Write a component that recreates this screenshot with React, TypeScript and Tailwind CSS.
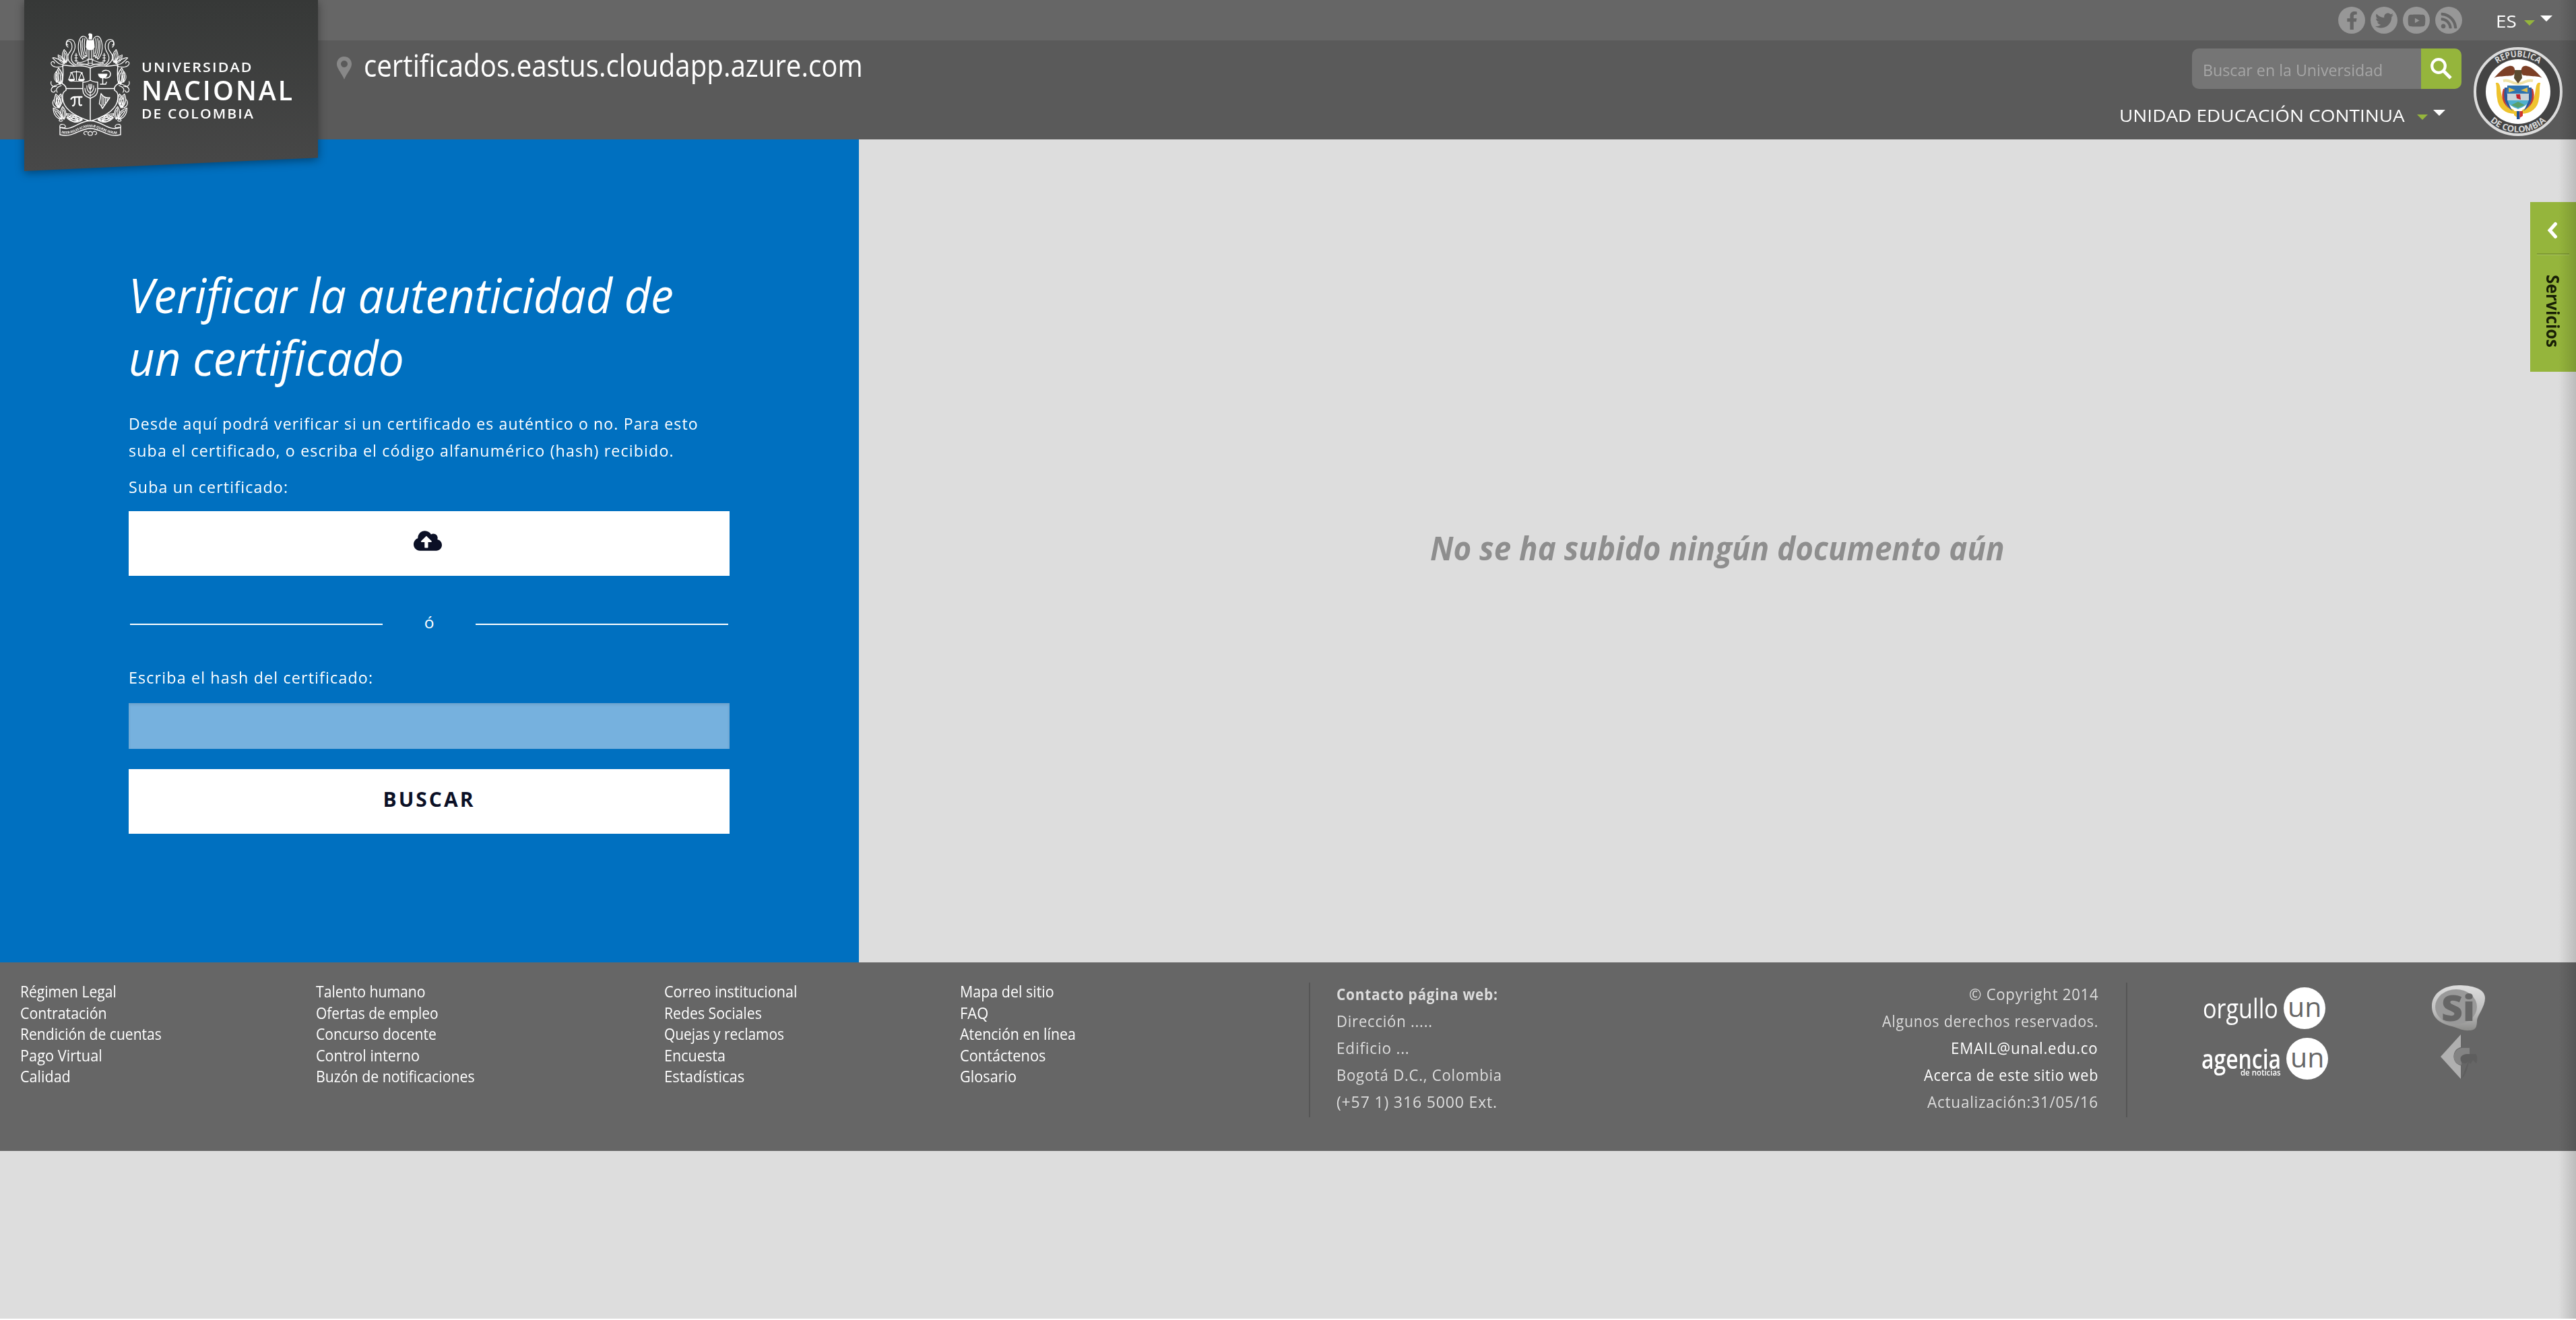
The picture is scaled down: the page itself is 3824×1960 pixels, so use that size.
import { useLayoutEffect, useRef, useState, type ReactNode } from 'react';
import { FaCloudUploadAlt, FaFacebookF, FaTwitter, FaYoutube, FaRss } from 'react-icons/fa';

/* Single line of text condensed or stretched to an exact width. */
function Fit({ w, className = '', children }: { w: number; className?: string; children: ReactNode }) {
  const ref = useRef<HTMLSpanElement>(null);
  const [scale, setScale] = useState(1);
  useLayoutEffect(() => {
    if (ref.current && ref.current.offsetWidth) setScale(w / ref.current.offsetWidth);
  }, [w]);
  return (
    <span className={`block ${className}`} style={{ width: w }}>
      <span ref={ref} className="inline-block origin-left whitespace-nowrap" style={{ transform: `scaleX(${scale})` }}>
        {children}
      </span>
    </span>
  );
}

function Leaf({ x, y, r, s = 1 }: { x: number; y: number; r: number; s?: number }) {
  return (
    <g transform={`translate(${x} ${y}) rotate(${r}) scale(${s})`}>
      <path d="M0 0C-5.500 -5 -5.500 -13 0 -20C5 -13 5.500 -5 0 0Z" />
      <path d="M0 0C-2 -6 -2 -11 0 -17M0 -1C2.200 -6 2.200 -10 1 -14" />
    </g>
  );
}

function HalfWreath() {
  return (
    <g>
      <path d="M110 97C100 92 98 84 104 77C109 71 107 62 102 61C98 61 98 66 101 67M112 96C106 92 104 86 108 79C114 70 112 59 104 58.500C97 59 97 68 101 70" />
      <Leaf x={98} y={93} r={-8} s={0.98} />
      <Leaf x={96} y={94} r={-38} s={0.8} />
      <path d="M96 92C88 90 82 84 78 86C86 94 90 98 96 94M94 98C86 101 78 100 76 95C75 91 80 90 81 94" />
      <Leaf x={89} y={125} r={-5} s={1.2} />
      <Leaf x={84} y={122} r={-2} s={0.8} />
      <path d="M91 124C84 126 77 128 76 133C76 138 82 138 82 134M91 127C85 129 82 132 85 137M76 121C74 127 80 130 84 128" />
      <Leaf x={88} y={160} r={-14} s={1.05} />
      <Leaf x={86} y={160} r={12} s={1.05} />
      <Leaf x={92} y={177} r={-38} s={1.05} />
      <Leaf x={95} y={177} r={-6} s={0.95} />
      <path d="M84 160C78 158 77 152 80 148M90 176C85 180 90 181 93 179" />
      <Leaf x={122} y={178} r={-82} s={1.15} />
      <Leaf x={116} y={180} r={-58} s={1.05} />
    </g>
  );
}

function UniversityCrest() {
  return (
    <svg viewBox="73 48 121 155" className="h-[155px] w-[121px]" fill="none" stroke="#fff" strokeWidth="1.200" strokeLinecap="round" strokeLinejoin="round">
      <HalfWreath />
      <g transform="translate(267.600 0) scale(-1 1)">
        <HalfWreath />
      </g>
      <path strokeWidth="1.500" d="M134 101C128 98 122 97 112 98C105 99 98 96 93 97C94 106 94 115 92 124C96 126 99 129 98 134C95 136 92 138 93 146C94 162 112 173 134 180C156 173 174 162 175 146C176 138 173 136 170 134C169 129 172 126 176 124C174 115 174 106 175 97C170 96 163 99 156 98C146 97 140 98 134 101Z" />
      <path d="M134 98C128 95 121 94 112 95.500M134 98C140 95 147 94 156 95.500" />
      <path strokeWidth="1.500" d="M134 101V180M99 131.500H169" />
      <path fill="#414141" strokeWidth="1.400" d="M123 122C127 122 131 121 134 119C137 121 141 122 145 122V134C145 140 140 144 134 146C128 144 123 140 123 134Z" />
      <path d="M134 144V125M134 142C128 140 126 136 126 131M134 142C140 140 142 136 142 131M134 138C130 136 128.500 133 129 127M134 138C138 136 139.500 133 139 127M134 133C132 131 131.500 128 132 125M134 133C136 131 136.500 128 136 125" />
      {/* scales */}
      <path d="M113.500 105V119M109 120.500H118M104.500 108C110 106 117 106 122.500 108M106 108L102 118H110.500L107 108M121 108L117 118H125L121.500 108" />
      <path fill="#fff" d="M102 118H110.500C109.500 121.500 103 121.500 102 118ZM116.500 118H125C124 121.500 117.500 121.500 116.500 118Z" />
      {/* cup and serpent */}
      <path fill="#fff" d="M146 110H159C158 115 155 116 152.500 116C150 116 147 115 146 110Z" />
      <path strokeWidth="1.500" d="M152.500 116V124M149 125H157L158 122M152 106C156 103 164 104 164 110C164 115 160 116 156 116" />
      {/* pi */}
      <path strokeWidth="2.300" d="M105.500 147C107 143.500 109 144 121.500 144M111 144V151C111 155 110 157 108 157M117.500 144V153C117.500 156 119 157 121 156" />
      {/* harp */}
      <path strokeWidth="1.500" d="M150 139L147.500 154C151 157 151 159 152 161L163 145C158 146 153 144 150 139Z" />
      <path d="M151.500 143V157M154 145V156M156.500 146V153M159 146V150" />
      {/* eagle */}
      <path fill="#fff" d="M134 50C131 49.500 131.500 53 133 52.500L132 58H136C136 54 138 50 134 50ZM129 60H139L140 70L136.500 74H131.500L128 70Z" />
      <path d="M130 60C128 53 122 52 119 57C115 65 115 78 121 86L123 88L124 84L126 86L127 82L129 84V72M138 60C140 53 146 52 149 57C153 65 153 78 147 86L145 88L144 84L142 86L141 82L139 84V72" />
      <path d="M120 60C119 68 120 76 122 84M123 57C121 66 122 75 125 83M126 57C124.500 66 125 74 127 80M148 60C149 68 148 76 146 84M145 57C147 66 146 75 143 83M142 57C143.500 66 143 74 141 80M132 75V87M136 75V87M129 88H139M131 62L134 65L137 62M130.500 67L134 70L137.500 67" />
      <path d="M113 79V92M111 82H115M111 86H115M111 90H115M154.600 79V92M152.600 82H156.600M152.600 86H156.600M152.600 90H156.600" />
      <path d="M115 92C121 95 126 90 131 89V95C126 95 121 97 115 95ZM153 92C147 95 142 90 137 89V95C142 95 147 97 153 95ZM131 88H137V94H131Z" />
      {/* ribbon */}
      <path fill="#424242" strokeWidth="1.400" d="M89 189C108 196 116 179 134 179.500C152 179 160 196 179 189V200C160 205 150 191 134 190.500C118 191 108 205 89 200Z" />
      <path d="M89 189C87 184 95 183 97 187C98 190 94 190.500 92 189M179 189C181 184 173 183 171 187C170 190 174 190.500 176 189" />
      <path d="M134 201C129 201 130 196 134 195C138 196 139 201 134 201ZM130 196C125 193 122 199 127 200M138 196C143 193 146 199 141 200" />
      <path id="motto" stroke="none" d="M91 198C108 202 118 189 134 188.500C150 189 160 202 178 198" />
      <text fill="#fff" stroke="none" fontSize="5" fontWeight="700" className="font-['Open_Sans',sans-serif]">
        <textPath href="#motto" textLength="86" lengthAdjust="spacingAndGlyphs">INTER·AULAS·ACADEMIÆ·QUÆRE·VERUM</textPath>
      </text>
    </svg>
  );
}

function LogoPanel() {
  return (
    <div className="absolute left-[36px] top-0 h-[254px] w-[436px] drop-shadow-[0_3px_7px_rgba(0,0,0,0.4)]">
      <div className="flex h-full bg-gradient-to-b from-[#363837] to-[#484848] pl-[37px] pt-[48px] [clip-path:polygon(0_0,100%_0,100%_92.200%,0_100%)]">
        <UniversityCrest />
        <div className="ml-[16px] mt-[40px] font-semibold text-white">
          <Fit w={166} className="text-[20px] leading-[24px] tracking-[2px]">UNIVERSIDAD</Fit>
          <Fit w={227} className="text-[39px] leading-[43px] tracking-[3px]">NACIONAL</Fit>
          <Fit w={168} className="text-[20px] leading-[27px] tracking-[2px]">DE COLOMBIA</Fit>
        </div>
      </div>
    </div>
  );
}

function ColombiaSeal() {
  return (
    <svg viewBox="0 0 132 132" className="mt-[10px] h-[132px] w-[132px]">
      <circle cx="66" cy="66" r="64" fill="#444" stroke="#dcdcdc" strokeWidth="4" />
      <circle cx="66" cy="66" r="48" fill="#fff" />
      <path id="sealTop" d="M14.500 66A51.500 51.500 0 0 1 117.500 66" fill="none" />
      <path id="sealBottom" d="M5.500 66A60.500 60.500 0 0 0 126.500 66" fill="none" />
      <g fill="#d8d8d8" fontSize="13" fontWeight="700" textAnchor="middle" className="font-['Open_Sans',sans-serif]">
        <text><textPath href="#sealTop" startOffset="50%" textLength="66" lengthAdjust="spacingAndGlyphs">REPÚBLICA</textPath></text>
        <text><textPath href="#sealBottom" startOffset="50%" textLength="92" lengthAdjust="spacingAndGlyphs">DE COLOMBIA</textPath></text>
      </g>
      <path d="M34 54C40 52 38 68 42 76C46 88 54 92 59 94L61 98C48 98 37 90 36 76C34 68 36 60 34 54ZM98 54C92 52 94 68 90 76C86 88 78 92 73 94L71 98C84 98 95 90 96 76C98 68 96 60 98 54Z" fill="#eec32e" stroke="#eec32e" strokeWidth="2" />
      <path d="M46 60C42 74 46 86 58 95C51 84 49 74 50 60ZM86 60C90 74 86 86 74 95C81 84 83 74 82 60Z" fill="#2c5a9c" />
      <path d="M44 62C40 74 43 84 54 92C46 84 44 74 46 62ZM88 62C92 74 89 84 78 92C86 84 88 74 86 62Z" fill="#c83a30" />
      <path d="M50 57H82V76C82 86 73 89 66 92C59 89 50 86 50 76Z" fill="#4fb0cf" />
      <path d="M50 57H82V69H50Z" fill="#2f74b0" />
      <path d="M50 69H82V79H50Z" fill="#c9d2d6" />
      <path d="M52 60L62 64L52 67ZM80 60L70 64L80 67Z" fill="#e2c04a" />
      <path d="M63 70L69 70L70 78L64 76Z" fill="#c3202c" />
      <path d="M56 86L66 81L76 86L66 90Z" fill="#58a06a" />
      <path d="M60 95H64V104L60 101Z" fill="#f0c42c" />
      <path d="M64 95H68.500V107H64Z" fill="#23508f" />
      <path d="M68.500 95H73V102L68.500 105Z" fill="#d0342c" />
      <path d="M44 50C54 47 56 55 66 54C76 55 78 47 88 50" fill="none" stroke="#f0e3a8" strokeWidth="4" />
      <path d="M30 46C38 38 44 30 53 28C60 27 62 32 61 38C60 44 52 42 46 43C40 44 34 43 30 46ZM102 46C94 38 88 30 79 28C72 27 70 32 71 38C72 44 80 42 86 43C92 44 98 43 102 46Z" fill="#7c3f26" />
      <path d="M61 34H71L72 46L66 54L60 46Z" fill="#5b4a30" />
    </svg>
  );
}

function Carets() {
  return (
    <span className="flex items-start gap-[8px]">
      <svg viewBox="0 0 16 8" className="mt-[7px] h-[8px] w-[16px]"><path d="M0 0H16L8 8Z" fill="#95b53c" /></svg>
      <svg viewBox="0 0 18 9" className="h-[9px] w-[18px]"><path d="M0 0H18L9 9Z" fill="#fff" /></svg>
    </span>
  );
}

const social = [FaFacebookF, FaTwitter, FaYoutube, FaRss];

function Header() {
  return (
    <header className="relative z-10 h-[207px] bg-[#5a5a5a]">
      <div className="flex h-[60px] items-start justify-end bg-[#666] pr-[35px]">
        <div className="mt-[10px] flex gap-[8px]">
          {social.map((Icon, i) => (
            <span key={i} className="flex h-[40px] w-[40px] items-center justify-center rounded-full bg-[#979797]">
              <Icon className="text-[27px] text-[#666]" />
            </span>
          ))}
        </div>
        <Fit w={31} className="ml-[50px] mt-[13px] text-[26px] leading-[36px] text-white">ES</Fit>
        <span className="ml-[11px] mt-[23px]"><Carets /></span>
      </div>
      <div className="flex h-[147px] items-start pl-[500px] pr-[20px]">
        <svg viewBox="0 0 22 34" className="mt-[24px] h-[34px] w-[22px]">
          <path fillRule="evenodd" fill="#888" d="M11 0C17 0 22 4.500 22 11C22 18 15 24 11 34C7 24 0 18 0 11C0 4.500 5 0 11 0ZM11 6A5 5 0 1 0 11 16A5 5 0 1 0 11 6Z" />
        </svg>
        <Fit w={741} className="ml-[18px] mt-[13px] text-[45px] font-medium leading-[48px] text-white">certificados.eastus.cloudapp.azure.com</Fit>
        <div className="ml-auto mr-[18px] flex flex-col items-end">
          <div className="mt-[12px] flex h-[60px] w-[400px] overflow-hidden rounded-[10px] bg-[#757575]">
            <Fit w={267} className="ml-[16px] mt-[14px] text-[24px] leading-[36px] text-[#a6a6a6]">Buscar en la Universidad</Fit>
            <span className="ml-auto flex w-[60px] items-center justify-center bg-[#95b53c]">
              <svg viewBox="0 0 32 32" className="h-[32px] w-[32px]" fill="none" stroke="#fff">
                <circle cx="12" cy="12" r="9.800" strokeWidth="4.200" />
                <path d="M19 19L30 30" strokeWidth="5" />
              </svg>
            </span>
          </div>
          <div className="mr-[24px] mt-[21px] flex">
            <Fit w={424} className="text-[26px] leading-[36px] text-white">UNIDAD EDUCACIÓN CONTINUA</Fit>
            <span className="ml-[18px] mt-[10px]"><Carets /></span>
          </div>
        </div>
        <ColombiaSeal />
      </div>
      <LogoPanel />
    </header>
  );
}

function VerifyPanel() {
  return (
    <section className="h-full w-[1275px] bg-[#0070c0] pl-[191px] pt-[184px] text-[24.500px] leading-[40px] text-white">
      <div className="flex w-[892px] flex-col">
        <h1 className="text-[72px] font-medium italic leading-[93px]">
          <Fit w={809}>Verificar la autenticidad de</Fit>
          <Fit w={409}>un certificado</Fit>
        </h1>
        <p className="mt-[32px] tracking-[1.200px]">
          <Fit w={846}>Desde aquí podrá verificar si un certificado es auténtico o no. Para esto</Fit>
          <Fit w={810}>suba el certificado, o escriba el código alfanumérico (hash) recibido.</Fit>
        </p>
        <Fit w={237} className="mt-[14px] tracking-[1.200px]">Suba un certificado:</Fit>
        <button className="mt-[16px] flex h-[96px] items-center justify-center bg-white pb-[8px] pr-[4px]">
          <FaCloudUploadAlt className="text-[42px] text-[#0b1026]" />
        </button>
        <div className="mt-[49px] flex items-start justify-between px-[2px]">
          <span className="mt-[22px] h-[2px] w-[375px] bg-white" />
          <span>ó</span>
          <span className="mt-[22px] h-[2px] w-[375px] bg-white" />
        </div>
        <Fit w={363} className="mt-[42px] tracking-[1.200px]">Escriba el hash del certificado:</Fit>
        <input className="mt-[18px] h-[68px] w-full bg-[#76b1de] shadow-[inset_0_2px_4px_rgba(0,0,0,0.1)]" />
        <button className="mt-[30px] flex h-[96px] items-center justify-center bg-white pb-[6px] text-[30px] font-bold tracking-[3px] text-[#0b1026]">
          <Fit w={137}>BUSCAR</Fit>
        </button>
      </div>
    </section>
  );
}

type Item = [string, number];

const linkColumns: Item[][] = [
  [['Régimen Legal', 143], ['Contratación', 129], ['Rendición de cuentas', 210], ['Pago Virtual', 122], ['Calidad', 75]],
  [['Talento humano', 163], ['Ofertas de empleo', 182], ['Concurso docente', 179], ['Control interno', 154], ['Buzón de notificaciones', 236]],
  [['Correo institucional', 197], ['Redes Sociales', 145], ['Quejas y reclamos', 178], ['Encuesta', 91], ['Estadísticas', 119]],
  [['Mapa del sitio', 140], ['FAQ', 42], ['Atención en línea', 172], ['Contáctenos', 127], ['Glosario', 84]],
];

const contact: Item[] = [['Dirección .....', 143], ['Edificio ...', 109], ['Bogotá D.C., Colombia', 246], ['(+57 1) 316 5000 Ext.', 239]];

function UnBadge({ label, labelWidth, bold = false, note }: { label: string; labelWidth: number; bold?: boolean; note?: string }) {
  return (
    <div className="flex items-center justify-end gap-[8px]">
      <div className="relative text-white">
        <Fit w={labelWidth} className={bold ? 'text-[40px] font-semibold leading-[46px]' : 'text-[40px] font-medium leading-[46px]'}>{label}</Fit>
        {note && <Fit w={60} className="absolute right-0 top-[38px] text-[12px] font-semibold leading-[12px]">{note}</Fit>}
      </div>
      <span className="flex h-[62px] w-[62px] items-center justify-center rounded-full bg-white pb-[6px] text-[#666]">
        <Fit w={50} className="text-[41px] font-medium leading-[50px]">un</Fit>
      </span>
    </div>
  );
}

function SiLogo() {
  return (
    <svg viewBox="0 0 80 68" className="h-[68px] w-[80px] overflow-visible">
      <defs>
        <linearGradient id="siOuter" x1="0" y1="0" x2="0" y2="1">
          <stop offset="0" stopColor="#dedede" />
          <stop offset="0.600" stopColor="#bcbcbc" />
          <stop offset="1" stopColor="#8c8c8a" />
        </linearGradient>
      </defs>
      <path fill="url(#siOuter)" d="M40 0C58 0 79 4 79 19C79 32 68 44 67 52C67 60 66 67 56 67C46 68 38 63 30 61C12 57 0 48 0 31C0 12 18 0 40 0Z" />
      <ellipse cx="36" cy="32" rx="31" ry="26" fill="#999" />
      <text x="14" y="53" textLength="50" lengthAdjust="spacingAndGlyphs" fontSize="53" fontWeight="800" fill="#666" className="font-['Open_Sans',sans-serif]">Si</text>
    </svg>
  );
}

function ArrowLogo() {
  return (
    <svg viewBox="0 0 56 66" className="h-[66px] w-[56px]">
      <path fill="#b0b0b0" d="M30 0V19C16 22 16 43 30 46V66L0 33Z" />
      <path fill="#838383" d="M43 20H32C16 21 16 45 31 45V38C27 34 31 29 43 29Z" />
      <path fill="#5e5e5e" d="M43 29C32 28 27 35 31 41C36 45 39 42 41 40L31 66C36 62 40 52 42 40C44 47 46 41 48 38L53 43C55 40 55 31 52 29Z" />
    </svg>
  );
}

function Footer() {
  return (
    <footer className="flex h-[280px] items-start bg-[#666] text-[23px] text-white">
      <div className="mt-[28px] grid w-[1912px] grid-cols-[439px_517px_439px_auto] pl-[30px] font-medium">
        {linkColumns.map((column, i) => (
          <ul key={i}>
            {column.map(([text, w]) => (
              <li key={text} className="h-[31.500px] leading-[31.500px]"><Fit w={w}>{text}</Fit></li>
            ))}
          </ul>
        ))}
      </div>
      <div className="ml-[31px] mt-[30px] flex h-[200px] w-[1215px] justify-between border-x-2 border-[#555] pl-[39px] pr-[41px] leading-[40px] text-[#ddd]">
        <div className="-mt-[3px] tracking-[0.800px]">
          <Fit w={240} className="font-bold">Contacto página web:</Fit>
          {contact.map(([text, w]) => <Fit key={text} w={w}>{text}</Fit>)}
        </div>
        <div className="-mt-[3px] flex flex-col items-end tracking-[0.800px]">
          <Fit w={192}>© Copyright 2014</Fit>
          <Fit w={321}>Algunos derechos reservados.</Fit>
          <Fit w={219} className="text-white">EMAIL@unal.edu.co</Fit>
          <Fit w={259} className="text-white">Acerca de este sitio web</Fit>
          <Fit w={254}>Actualización:31/05/16</Fit>
        </div>
      </div>
      <div className="ml-[110px] mt-[37px] flex w-[188px] flex-col gap-[13px]">
        <div className="pr-[4px]"><UnBadge label="orgullo" labelWidth={112} /></div>
        <UnBadge label="agencia" labelWidth={118} bold note="de noticias" />
      </div>
      <div className="ml-[154px] mt-[34px] flex w-[80px] flex-col items-start gap-[5px]">
        <SiLogo />
        <span className="ml-[13px]"><ArrowLogo /></span>
      </div>
    </footer>
  );
}

function ServicesTab() {
  return (
    <aside className="absolute right-0 top-[300px] z-20 flex h-[252px] w-[68px] flex-col items-center bg-[#95b53c]">
      <svg viewBox="0 0 16 26" className="mr-[2px] mt-[29px] h-[26px] w-[16px]" fill="none" stroke="#fff" strokeWidth="5" strokeLinecap="round">
        <path d="M12.500 3.500L4 13L12.500 22.500" />
      </svg>
      <span className="mt-[21px] h-[3px] w-[48px] border-b border-[#a9c45f] bg-[#7f9b33]" />
      <div className="mt-[29px] flex h-[108px] w-[36px] items-center justify-center">
        <div className="rotate-90">
          <Fit w={108} className="text-[27px] font-bold leading-[36px] text-[#181f06]">Servicios</Fit>
        </div>
      </div>
    </aside>
  );
}

export default function App() {
  return (
    <div className="relative h-[1960px] w-[3824px] overflow-hidden border-b-2 border-white bg-[#ddd] font-['Open_Sans',sans-serif]">
      <Header />
      <main className="flex h-[1222px]">
        <VerifyPanel />
        <section className="flex flex-1 items-center justify-center pb-[8px]">
          <Fit w={853} className="text-[48px] font-bold italic text-[#8e8e8e]">No se ha subido ningún documento aún</Fit>
        </section>
      </main>
      <Footer />
      <ServicesTab />
      <div className="pointer-events-none absolute inset-y-0 right-0 z-30 w-[26px] bg-gradient-to-r from-transparent to-black/15" />
    </div>
  );
}
